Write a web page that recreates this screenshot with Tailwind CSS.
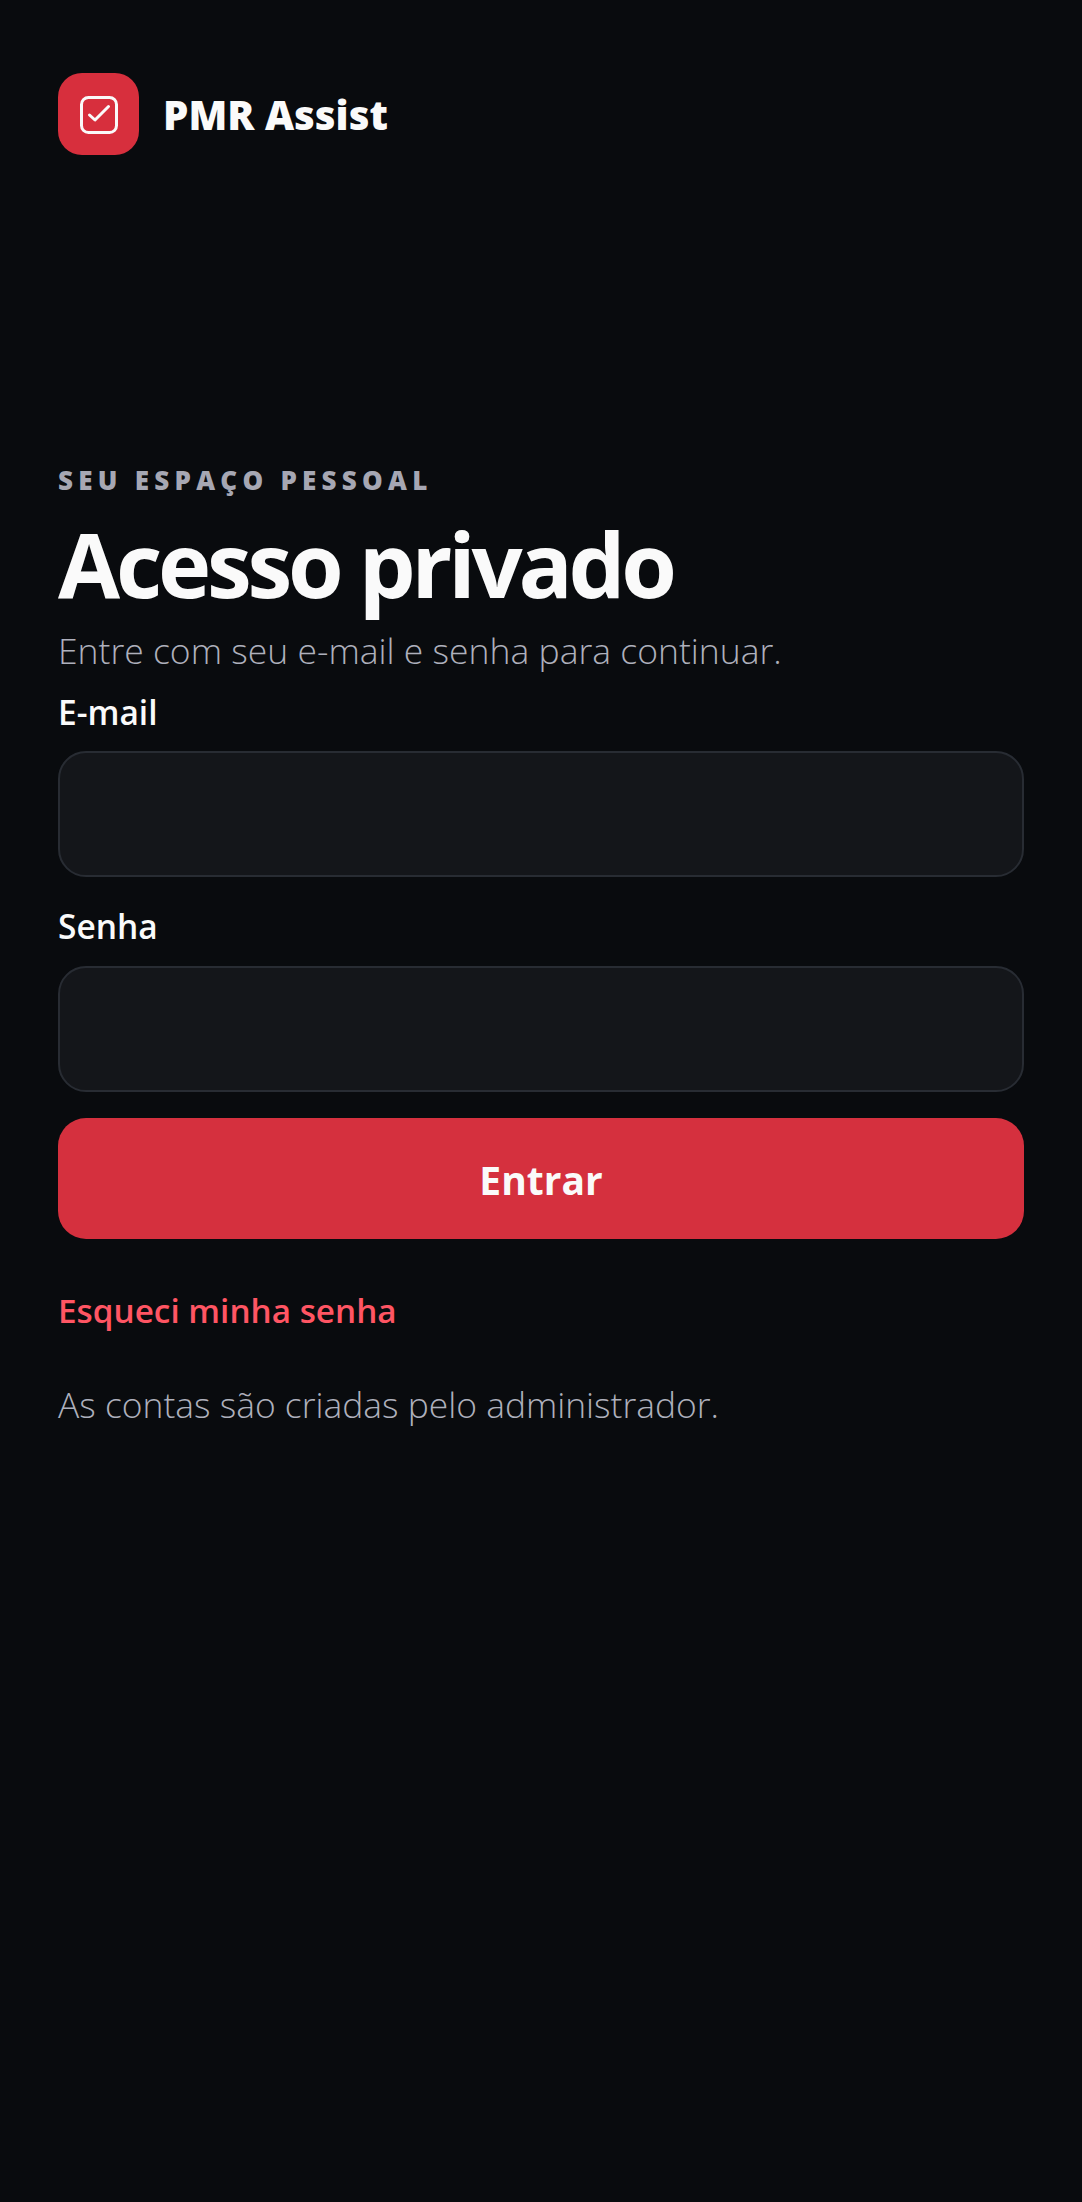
<!DOCTYPE html>
<html lang="pt-BR">
<head>
    <meta charset="UTF-8">
    <meta name="viewport" content="width=device-width, initial-scale=1.0">
    <title>PMR Assist</title>
    <script src="https://cdn.jsdelivr.net/npm/@tailwindcss/browser@4"></script>
</head>
<body class="bg-[#090b0e] min-h-screen font-['Open_Sans',sans-serif] text-[#fafafa]">
    <div class="px-[58px] pt-[73px]">
        <!-- Logo -->
        <div class="flex items-center gap-[24px]">
            <div class="w-[81px] h-[82px] rounded-[24px] bg-[#d72f3d] flex items-center justify-center">
                <svg width="38" height="38" viewBox="0 0 38 38" fill="none" stroke="#fafafa" stroke-linecap="round" stroke-linejoin="round" class="mt-[2px]">
                    <rect x="1.5" y="1.5" width="35" height="35" rx="7" stroke-width="3"></rect>
                    <path d="M9.5 19l5.5 5L28.5 10.500" stroke-width="3"></path>
                </svg>
            </div>
            <div class="text-[40.200px] leading-[48px] font-extrabold mt-[2px]">PMR Assist</div>
        </div>

        <!-- Titulo -->
        <div class="mt-[308px] text-[26px] leading-[34px] font-extrabold tracking-[5.250px] text-[#a6a7b3]">SEU ESPAÇO PESSOAL</div>
        <h1 class="text-[90px] leading-[110px] font-bold tracking-[-4.2px] mt-[11px]">Acesso privado</h1>
        <p class="text-[35.500px] leading-[44px] font-light text-[#aeb0bc] mt-[10px]">Entre com seu e-mail e senha para continuar.</p>

        <!-- Formulario -->
        <form class="mt-[16px]">
            <label class="block text-[33.500px] leading-[48px] font-semibold">E-mail</label>
            <input type="email" class="block w-full h-[126px] mt-[15px] rounded-[28px] border-2 border-[#282c33] bg-[#14161a]">
            <label class="block text-[33.500px] leading-[48px] font-semibold mt-[25px]">Senha</label>
            <input type="password" class="block w-full h-[126px] mt-[16px] rounded-[28px] border-2 border-[#282c33] bg-[#14161a]">
            <button type="button" class="block w-full h-[121px] mt-[26px] pt-[4px] rounded-[28px] bg-[#d5303e] text-[39px] font-bold text-[#fafafa]">Entrar</button>
        </form>

        <a class="block mt-[48px] text-[33.300px] leading-[46px] font-semibold text-[#ff5563]">Esqueci minha senha</a>
        <p class="mt-[48px] text-[35.400px] leading-[46px] font-light text-[#aeb0bc]">As contas são criadas pelo administrador.</p>
    </div>
</body>
</html>
